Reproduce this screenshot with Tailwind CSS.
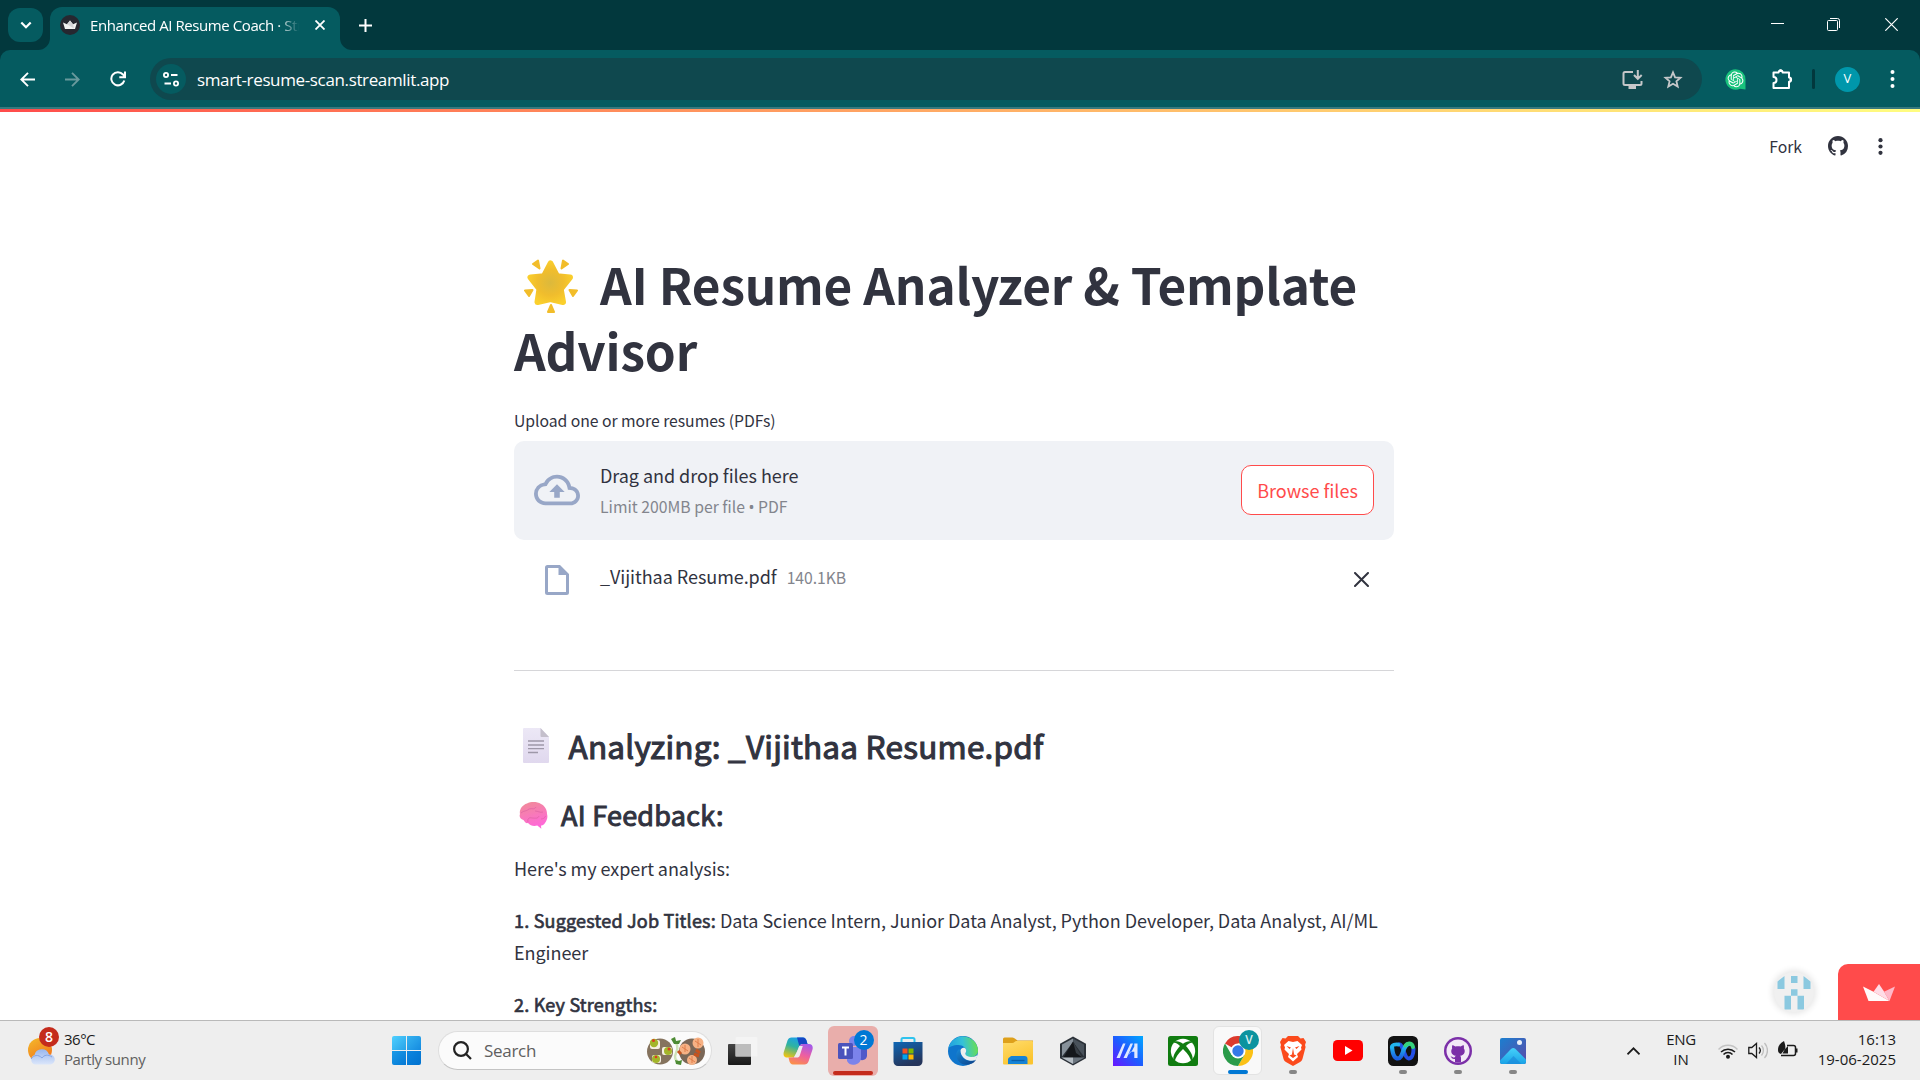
<!DOCTYPE html>
<html lang="en">
<head>
<meta charset="utf-8">
<title>Enhanced AI Resume Coach · Streamlit</title>
<script src="https://cdn.jsdelivr.net/npm/@tailwindcss/browser@4"></script>
</head>
<body class="w-[1920px] h-[1080px] overflow-hidden flex flex-col bg-white font-['Open_Sans',sans-serif]">

<!-- Tab strip -->
<header class="h-[50px] shrink-0 bg-[#02383d] flex items-start text-white">
  <div class="ml-2 mt-2 w-[35px] h-[34px] rounded-xl bg-[#055b60] flex items-center justify-center">
    <svg class="w-[12px] h-[8px]" viewBox="0 0 12 8" fill="none" stroke="#fff" stroke-width="2.2"><path d="M1.3 1.5 6 6.2l4.700-4.700"/></svg>
  </div>
  <div class="relative ml-[7px] mt-[7px] w-[290px] h-[43px] rounded-t-xl bg-[#055b60] flex items-center pb-[7px]">
    <svg class="absolute bottom-0 -left-[12px] w-[12px] h-[12px]" viewBox="0 0 12 12"><path d="M12 0v12H0A12 12 0 0 0 12 0z" fill="#055b60"/></svg>
    <svg class="absolute bottom-0 -right-[12px] w-[12px] h-[12px]" viewBox="0 0 12 12"><path d="M0 0v12h12A12 12 0 0 1 0 0z" fill="#055b60"/></svg>
    <svg class="ml-[10px] w-5 h-5" viewBox="0 0 20 20"><circle cx="10" cy="10" r="10" fill="#262730"/><path d="M3 7.500l4 1.800L10 5.600l3 3.700 4-1.800-2 6.500H5z" fill="#f1f1f1"/><path d="M10 5.600 7 9.300l7 4.200-1-4.200z" fill="#d5d5d8"/></svg>
    <div class="ml-[10px] w-[209px] overflow-hidden whitespace-nowrap text-[15px] leading-5 tracking-[-0.42px] mask-r-from-90% mask-r-to-100%">Enhanced AI Resume Coach · Streamlit</div>
    <svg class="ml-[16px] w-[10px] h-[10px]" viewBox="0 0 10 10" stroke="#fff" stroke-width="1.800"><path d="M.5.5l9 9M9.500.5l-9 9"/></svg>
  </div>
  <svg class="ml-[19px] mt-[19px] w-[13px] h-[13px]" viewBox="0 0 13 13" stroke="#fff" stroke-width="2"><path d="M6.500 0v13M0 6.500h13"/></svg>
  <div class="ml-auto mr-[22px] mt-[18px] flex items-center">
    <svg class="w-[13px] h-[13px]" viewBox="0 0 13 13" stroke="#fff"><path d="M0 5.500h13"/></svg>
    <svg class="ml-[43px] w-[13px] h-[13px]" viewBox="0 0 13 13" fill="none" stroke="#fff"><rect x=".5" y="2.500" width="10" height="10" rx="1"/><path d="M3 .5h7.500a2 2 0 0 1 2 2V10"/></svg>
    <svg class="ml-[45px] w-[13px] h-[13px]" viewBox="0 0 13 13" stroke="#fff" stroke-width="1.200"><path d="M.3.300l12.400 12.400M12.700.3.300 12.700"/></svg>
  </div>
</header>

<!-- Toolbar -->
<div class="h-[57px] shrink-0 bg-[#02383d]">
  <div class="h-[57px] rounded-t-[10px] bg-[#055b60] flex items-center pt-[1px]">
    <svg class="ml-5 w-[15px] h-[15px]" viewBox="0 0 15 15" fill="none" stroke="#fff" stroke-width="1.900"><path d="M15 7.500H1.500M8 .8 1.300 7.500 8 14.200"/></svg>
    <svg class="ml-[30px] w-[15px] h-[15px]" viewBox="0 0 15 15" fill="none" stroke="#69999c" stroke-width="1.900"><path d="M0 7.500h13.500M7 .8l6.700 6.700L7 14.200"/></svg>
    <svg class="ml-[30px] w-[16px] h-[16px]" viewBox="0 0 16 16" fill="none" stroke="#fff" stroke-width="2"><path d="M14.300 9.500A6.600 6.600 0 1 1 13 3.500l1.800 2.300M15 .5v5.800H9.300"/></svg>
    <div class="ml-6 w-[1552px] h-[42px] rounded-full bg-[#0f484e] flex items-center px-[6px]">
      <div class="w-[30px] h-[30px] rounded-full bg-[#055b60] flex items-center justify-center">
        <svg class="w-4 h-[15px]" viewBox="0 0 16 15" fill="none" stroke="#fff" stroke-width="1.800"><circle cx="3" cy="3" r="2.100"/><path d="M8 3h6.500M1.500 11.500H8"/><circle cx="13" cy="11.500" r="2.100"/></svg>
      </div>
      <div class="ml-[11px] pt-px text-[17px] leading-6 tracking-[-0.36px] text-white">smart-resume-scan.streamlit.app</div>
      <svg class="ml-auto w-[21px] h-[19px]" viewBox="0 0 21 19" fill="none" stroke="#c5c7c9" stroke-width="2"><path d="M11 2H3a1.500 1.500 0 0 0-1.500 1.500v10A1.500 1.500 0 0 0 3 15h15a1.500 1.500 0 0 0 1.500-1.500V11M15.800 0v8.500M12 5l3.800 3.900L19.700 5"/><path d="M6.500 17.500h7.500" stroke-width="3"/></svg>
      <svg class="ml-5 mr-[13px] w-[20px] h-[19px]" viewBox="0 0 20 19" fill="none" stroke="#c5c7c9" stroke-width="1.800"><path d="M10 2.300l2.100 5 5.400.5-4.100 3.500 1.300 5.300L10 13.800l-4.700 2.800 1.300-5.300-4.100-3.500 5.400-.5z"/></svg>
    </div>
    <svg class="ml-[23px] w-[21px] h-[21px]" viewBox="0 0 21 21"><path d="M10.500.3A10.200 10.200 0 1 0 15 19.700l5.500.8V10.500A10.200 10.200 0 0 0 10.500.3z" fill="#19c37d"/><g transform="translate(2.600 2.500) scale(.66)"><path fill="#fff" d="M22.282 9.821a5.985 5.985 0 0 0-.516-4.910 6.046 6.046 0 0 0-6.510-2.900A6.065 6.065 0 0 0 4.981 4.182a5.985 5.985 0 0 0-3.998 2.900 6.046 6.046 0 0 0 .743 7.097 5.980 5.980 0 0 0 .511 4.911 6.051 6.051 0 0 0 6.515 2.900A5.985 5.985 0 0 0 13.260 24a6.056 6.056 0 0 0 5.772-4.206 5.990 5.990 0 0 0 3.998-2.900 6.056 6.056 0 0 0-.748-7.073zm-9.022 12.608a4.476 4.476 0 0 1-2.876-1.040l.142-.081 4.778-2.758a.795.795 0 0 0 .393-.681v-6.737l2.020 1.168a.071.071 0 0 1 .038.052v5.583a4.504 4.504 0 0 1-4.495 4.494zm-9.661-4.125a4.471 4.471 0 0 1-.535-3.014l.142.085 4.783 2.758a.771.771 0 0 0 .781 0l5.843-3.369v2.333a.080.080 0 0 1-.033.061L9.740 19.950a4.499 4.499 0 0 1-6.141-1.646zM2.341 7.896a4.485 4.485 0 0 1 2.365-1.973V11.600a.766.766 0 0 0 .388.677l5.814 3.354-2.020 1.169a.076.076 0 0 1-.071 0l-4.830-2.787A4.504 4.504 0 0 1 2.341 7.872zm16.596 3.855L13.104 8.364 15.119 7.200a.076.076 0 0 1 .071 0l4.830 2.791a4.494 4.494 0 0 1-.676 8.104v-5.677a.790.790 0 0 0-.407-.667zm2.011-3.023l-.142-.085-4.773-2.782a.776.776 0 0 0-.786 0L9.409 9.230V6.897a.066.066 0 0 1 .028-.061l4.830-2.787a4.499 4.499 0 0 1 6.681 4.660zM8.307 12.863l-2.020-1.164a.080.080 0 0 1-.038-.057V6.074a4.499 4.499 0 0 1 7.375-3.453l-.142.080L8.704 5.459a.795.795 0 0 0-.393.681zm1.097-2.365l2.602-1.500 2.607 1.500v2.999l-2.597 1.500-2.607-1.500Z"/></g></svg>
    <svg class="ml-[25px] w-[22px] h-[22px]" viewBox="0 0 22 22"><path d="M2.500 4.500H7.600a2 2 0 0 1 4 0H18V9.600a2.100 2.100 0 0 1 0 4.200V20H2.500v-5a3 3 0 0 0 0-6z" fill="none" stroke="#fff" stroke-width="2" stroke-linejoin="round"/><path d="M7.500 4a2 2.600 0 0 1 4.200 0zM18.500 9.500a2.400 2.200 0 0 1 0 4.400z" fill="#fff"/></svg>
    <div class="ml-[19px] w-[3px] h-5 rounded bg-[#02383d]"></div>
    <div class="ml-5 w-[25px] h-[25px] rounded-full bg-[#0097ab] text-white text-[13px] flex items-center justify-center">V</div>
    <svg class="ml-[30px] w-[5px] h-[18px]" viewBox="0 0 5 18" fill="#fff"><circle cx="2.500" cy="2" r="2"/><circle cx="2.500" cy="9" r="2"/><circle cx="2.500" cy="16" r="2"/></svg>
  </div>
</div>
<div class="h-[2px] shrink-0 bg-[#37797e]"></div>

<!-- Streamlit page -->
<main class="relative h-[911px] shrink-0 overflow-hidden bg-white text-[#31333f] font-['Noto_Sans_CJK_SC',sans-serif]">
  <div class="h-[3px] bg-linear-to-r from-[#ff4b4b] to-[#fffd80]"></div>
  <div class="h-[68px] flex items-center justify-end pr-[37px]">
    <span class="pt-[2px] text-[15.75px] leading-6">Fork</span>
    <svg class="ml-[26px] w-5 h-5" viewBox="0 0 16 16" fill="#31333f"><path d="M8 0C3.580 0 0 3.580 0 8c0 3.540 2.290 6.530 5.470 7.590.4.070.55-.17.55-.38 0-.19-.01-.82-.01-1.490-2.010.37-2.530-.49-2.690-.94-.09-.23-.48-.94-.82-1.130-.28-.15-.68-.52-.01-.53.63-.01 1.080.58 1.230.82.72 1.210 1.870.87 2.330.66.070-.52.28-.87.51-1.070-1.780-.2-3.640-.89-3.640-3.950 0-.87.31-1.590.82-2.150-.08-.2-.36-1.020.08-2.120 0 0 .67-.21 2.200.82.64-.18 1.320-.27 2-.27s1.360.09 2 .27c1.530-1.040 2.200-.82 2.200-.82.44 1.100.16 1.920.08 2.120.51.56.82 1.270.82 2.150 0 3.070-1.870 3.750-3.650 3.950.29.25.54.73.54 1.480 0 1.070-.01 1.930-.01 2.200 0 .21.15.46.55.38A8.010 8.010 0 0 0 16 8c0-4.420-3.580-8-8-8z"/></svg>
    <svg class="ml-[30px] w-[5px] h-[17px]" viewBox="0 0 5 17" fill="#31333f"><circle cx="2.500" cy="2.200" r="2.100"/><circle cx="2.500" cy="8.500" r="2.100"/><circle cx="2.500" cy="14.800" r="2.100"/></svg>
  </div>

  <div class="ml-[514px] w-[880px] mt-[71px]">
    <h1 class="text-[49.5px] leading-[66px] font-bold whitespace-nowrap tracking-[-0.17px]">
      <span class="flex items-center h-[66px]">
        <svg class="ml-[10px] mt-[3px] w-[54px] h-[54px]" viewBox="0 0 54 54">
          <defs><radialGradient id="star" cx=".5" cy=".5" r=".6"><stop offset="0" stop-color="#dcb93c"/><stop offset=".55" stop-color="#f0bd2d"/><stop offset="1" stop-color="#fbd02c"/></radialGradient></defs>
          <path d="M26.500 4.500L33 17.200l13 1.200-9.300 11.600 2.300 13L26.500 40 13.500 43l2-13L6.500 18.400l13.500-1.200z" fill="url(#star)" stroke="url(#star)" stroke-width="6" stroke-linejoin="round"/>
          <g fill="#f2bd2a" stroke="#f2bd2a" stroke-width="2" stroke-linejoin="round"><path d="M9 5l5-3.500 1.500 8zM44 5l-5-3.500-1.500 8zM1 31.500l7.500-.5L5 37zM53 31.500l-7.500-.5L49 37zM27 46l3 7h-6z"/></g>
        </svg>
        <span class="ml-[22px]">AI Resume Analyzer &amp; Template</span>
      </span>
      <span>Advisor</span>
    </h1>
    <p class="mt-[26px] h-6 text-[15.75px] leading-6 tracking-[-0.04px]">Upload one or more resumes (PDFs)</p>
    <div class="mt-[8px] h-[99px] rounded-[10px] bg-[#f0f2f6] flex items-center px-5 pb-px">
      <svg class="w-[46px] h-[46px]" viewBox="0 0 24 24" fill="#98a7c7"><path d="M19.350 10.040A7.490 7.490 0 0 0 12 4C9.110 4 6.600 5.640 5.350 8.040A5.994 5.994 0 0 0 0 14c0 3.310 2.690 6 6 6h13c2.760 0 5-2.240 5-5 0-2.640-2.050-4.780-4.650-4.960zM19 18H6c-2.210 0-4-1.790-4-4 0-2.050 1.530-3.760 3.560-3.970l1.070-.11.5-.95A5.469 5.469 0 0 1 12 6c2.620 0 4.880 1.860 5.390 4.430l.3 1.500 1.530.11A2.980 2.980 0 0 1 22 15c0 1.650-1.350 3-3 3zM8 13h2.550v3h2.900v-3H16l-4-4-4 4z"/></svg>
      <div class="ml-5 flex flex-col items-start pt-[2px]">
        <span class="text-[18px] leading-8 tracking-[-0.05px]">Drag and drop files here</span>
        <span class="text-[15.75px] leading-8 text-[#83858d]">Limit 200MB per file <span class="font-['Noto_Sans',sans-serif]">•</span> PDF</span>
      </div>
      <button class="ml-auto w-[133px] h-[50px] rounded-[10px] border border-[#ff4b4b] bg-white text-[18px] text-[#ff4b4b] flex items-center justify-center">Browse files</button>
    </div>
    <div class="h-[80px] flex items-center pl-[31px] pr-[25px]">
      <svg class="w-6 h-[30px]" viewBox="0 0 24 30" fill="#98a7c7"><path fill-rule="evenodd" d="M2.500 0H15l9 9v18.500A2.500 2.500 0 0 1 21.500 30h-19A2.500 2.500 0 0 1 0 27.500v-25A2.500 2.500 0 0 1 2.500 0zM3 3v24h18V10h-7.500V3z"/></svg>
      <span class="ml-[31px] pb-[8px] text-[18px] leading-8 tracking-[-0.05px]">_Vijithaa Resume.pdf</span>
      <span class="ml-[10px] pb-[4px] text-[15.75px] leading-8 tracking-[-0.05px] text-[#83858d]">140.1KB</span>
      <svg class="ml-auto w-[15px] h-[15px] mb-[1px]" viewBox="0 0 15 15" stroke="#31333f" stroke-width="2" stroke-linecap="round"><path d="M1 1l13 13M14 1 1 14"/></svg>
    </div>
    <hr class="mt-[50px] border-0 h-px bg-[#d6d6d9]">
    <h2 class="mt-[51px] h-[46px] flex items-center text-[31.5px] font-normal [-webkit-text-stroke:1.1px_#31333f] leading-[46px] tracking-[0.23px] whitespace-nowrap">
      <svg class="ml-[9px] mt-px w-[26px] h-[35px]" viewBox="0 0 26 35"><defs><linearGradient id="doc" x1="0" y1="0" x2="0" y2="1"><stop offset="0" stop-color="#ece8f6"/><stop offset="1" stop-color="#e0d8ee"/></linearGradient></defs><path d="M1 0h16.500L26 9v25a1 1 0 0 1-1 1H1a1 1 0 0 1-1-1V1a1 1 0 0 1 1-1z" fill="url(#doc)"/><path d="M17.500 0v8a1 1 0 0 0 1 1H26z" fill="#c4bfcb"/><path d="M5 13h16M5 17h16M5 20.700h16M5 24.500h10" stroke="#9e98a9" stroke-width="1.300"/></svg>
      <span class="ml-[19.500px]">Analyzing: _Vijithaa Resume.pdf</span>
    </h2>
    <h3 class="mt-[27px] h-[40px] flex items-center text-[27px] font-normal [-webkit-text-stroke:1px_#31333f] leading-[40px] tracking-[0.26px] whitespace-nowrap">
      <svg class="ml-[5px] w-[29px] h-[27px]" viewBox="0 0 29 27"><defs><linearGradient id="brain" x1="0" y1="0" x2=".3" y2="1"><stop offset="0" stop-color="#f08c96"/><stop offset=".5" stop-color="#f77cb5"/><stop offset="1" stop-color="#ff68d8"/></linearGradient></defs><path d="M8 1.500C12-.5 18-.5 22 2c4 2 6 6 6 10 1 3 0 6-2 9-1 2-3 2.500-4 2.500l.3 3.300-4-3.300c-3 1-7 .5-9.300-2.500-2 .5-3-.5-4.500-3C1 17 0 14.500 1 12 0 8 3 3 8 1.500z" fill="url(#brain)"/><path d="M2 11c3-3 5-1 8-4M10 7c3-1 5 1 7-2M9 20c-1-3 1-5 4-4 3 0 6 1 7-2M16 9c3 0 5 2 8 1M22 17c2 0 4-1 4.500-3" fill="none" stroke="#dd62a2" stroke-width="1" opacity=".7"/></svg>
      <span class="ml-[13px]">AI Feedback:</span>
    </h3>
    <div class="mt-[17px] text-[18px] leading-8 tracking-[-0.05px] flex flex-col gap-5">
      <p>Here's my expert analysis:</p>
      <p class="whitespace-nowrap"><strong class="font-normal [-webkit-text-stroke:0.65px_#31333f] tracking-[0.2px]">1. Suggested Job Titles:</strong> Data Science Intern, Junior Data Analyst, Python Developer, Data Analyst, AI/ML<br>Engineer</p>
      <p><strong class="font-normal [-webkit-text-stroke:0.65px_#31333f] tracking-[0.2px]">2. Key Strengths:</strong></p>
    </div>
  </div>

  <div class="absolute left-[1774px] top-[863px] w-10 h-10 rounded-full bg-[#f0f0f0] shadow-[0_0_6px_2px_rgba(0,0,0,0.1)] overflow-hidden flex items-center justify-center">
    <svg class="w-10 h-10" viewBox="0 0 40 40" fill="#8bc9e0"><path d="M3.500 17V9.500L10.500 4v13zM36.500 17V9.500L29.500 4v13zM17 4h6.500v7H17zM17 17.300h6.500v6.500h6.500v13.700h-6.500V23.800H17v13.700h-6.500V23.800H17z"/></svg>
  </div>
  <div class="absolute right-0 bottom-0 w-[82px] h-[56px] rounded-tl-[10px] bg-[#ff4b4b]">
    <svg class="ml-[25px] mt-5 w-8 h-[17px]" viewBox="0 0 32 17"><path d="M0 2.500l10.500 5.300L26.500 17H5.500z" fill="#fffafa"/><path d="M10.500 7.800 16 0l5 7.500L26.500 17z" fill="#ffdce6"/><path d="M21 7.800 32 2.500 26.500 17z" fill="#ffb8c8"/></svg>
  </div>
</main>

<!-- Taskbar -->
<footer class="relative h-[60px] shrink-0 bg-[#eeeeee] border-t border-[#b9b9b9] flex items-center text-[#1b1b1b]">
  <div class="relative ml-7 w-[28px] h-[28px]">
    <svg class="w-[28px] h-[28px]" viewBox="0 0 28 28"><defs><linearGradient id="sun" x1="0" y1="0" x2=".6" y2="1"><stop offset="0" stop-color="#f3bb2c"/><stop offset="1" stop-color="#f2761b"/></linearGradient><linearGradient id="cl" x1="0" y1="0" x2="0" y2="1"><stop offset="0" stop-color="#98b6ee"/><stop offset="1" stop-color="#dbe6fa"/></linearGradient></defs><circle cx="12" cy="13" r="12" fill="url(#sun)"/><path d="M7 27.500a5 5 0 0 1-.5-9.500 7.500 7.500 0 0 1 14.500-.5 5 5 0 0 1 1.500 10z" fill="url(#cl)"/><path d="M3 22c3-4 7-5 11-1 2-3 6-4 10-1" fill="none" stroke="#86a5e4"/></svg>
    <div class="absolute left-[11px] -top-[10px] w-5 h-5 rounded-full bg-[#c42b1c] text-white text-[14px] font-semibold flex items-center justify-center">8</div>
  </div>
  <div class="ml-2 pb-1 flex flex-col items-start text-[15px] leading-5 w-[90px] whitespace-nowrap">
    <span class="tracking-[-0.5px]">36°C</span>
    <span class="text-[#606060] tracking-[-0.42px]">Partly sunny</span>
  </div>
  <div class="ml-[238px] w-[29px] h-[29px] grid grid-cols-2 gap-px">
    <div class="rounded-tl-[2px] bg-linear-to-br from-[#4fd0ff] to-[#27a3e8]"></div><div class="rounded-tr-[2px] bg-linear-to-br from-[#36b3f0] to-[#148be0]"></div>
    <div class="rounded-bl-[2px] bg-linear-to-br from-[#1a9be8] to-[#0678d4]"></div><div class="rounded-br-[2px] bg-linear-to-br from-[#0d86e0] to-[#0272cf]"></div>
  </div>
  <div class="ml-[17px] w-[274px] h-[39px] rounded-full bg-[#fbfbfb] border border-[#dedede] border-b-[#c4c4c4] flex items-center">
    <svg class="ml-[14px] w-[19px] h-[19px]" viewBox="0 0 19 19" fill="none" stroke="#222" stroke-width="2.200"><circle cx="8" cy="8" r="6.900"/><path d="M12.800 12.800l5.200 5.200"/></svg>
    <span class="ml-[12px] text-[17px] tracking-[-0.3px] text-[#5f5f5f]">Search</span>
    <svg class="ml-auto mr-[5px] w-[60px] h-[30px]" viewBox="0 0 60 30">
      <circle cx="14" cy="15.500" r="13" fill="#85735e"/><circle cx="46" cy="15.500" r="13" fill="#7a6757"/>
      <g fill="#f5efe2"><rect x="4" y="4" width="10" height="9" rx="2"/><rect x="16" y="11" width="10" height="8" rx="2"/><rect x="6" y="19" width="9" height="8" rx="2"/></g>
      <g fill="#a3b52a"><circle cx="8" cy="7" r="4.200"/><circle cx="22" cy="15" r="4"/><circle cx="10" cy="23" r="4"/></g>
      <g fill="#dd3b22"><circle cx="7.500" cy="4.500" r="1.500"/><circle cx="23" cy="13" r="1.500"/><circle cx="10" cy="21" r="1.300"/></g>
      <path d="M27 2c4 6 6 9 3 15s1 8 4 11" fill="none" stroke="#cfe3b8" stroke-width="2.500"/>
      <path d="M25 3l4-2 1 4 5-1-2 4h-5zM29 24l4 1 3-1-1 5-5-1z" fill="#4d8b35"/>
      <g fill="#f6b184"><circle cx="39" cy="13" r="5.500"/><circle cx="52" cy="7" r="5.500"/><circle cx="46" cy="24" r="5"/></g>
      <g fill="none" stroke="#e07e4a"><path d="M36 11l6 4M39 9v7M49 5l6 4M52 3v8M43 22l6 4M46 20v7"/></g>
      <path d="M50 14l4 3M32 15l3 3M48 18l5 2" stroke="#c7531d" stroke-width="3"/>
    </svg>
  </div>

  <nav class="ml-[3px] flex h-full">
    <div class="w-[55px] flex items-center justify-center"><svg class="w-[30px] h-[30px]" viewBox="0 0 30 30"><defs><linearGradient id="tv" x1="0" y1="0" x2="0" y2="1"><stop offset="0" stop-color="#454545"/><stop offset="1" stop-color="#191919"/></linearGradient></defs><rect y="8" width="23" height="21" rx="1" fill="url(#tv)"/><rect x="7.500" y="1" width="22" height="19.500" rx="1" fill="#f5f5f5" opacity=".75"/><path d="M7.500 8H23v12.500H7.500z" fill="#bdbdbd"/></svg></div>

    <div class="w-[55px] flex items-center justify-center"><svg class="w-[30px] h-[28px]" viewBox="0 0 30 28"><defs><linearGradient id="cp1" x1=".6" y1="0" x2=".2" y2="1"><stop offset="0" stop-color="#1aa0ea"/><stop offset=".45" stop-color="#2fb3a0"/><stop offset="1" stop-color="#f2c40f"/></linearGradient><linearGradient id="cp2" x1=".7" y1="0" x2=".3" y2="1"><stop offset="0" stop-color="#a55ae8"/><stop offset=".5" stop-color="#ee5fa0"/><stop offset="1" stop-color="#fb8f4a"/></linearGradient></defs><path d="M8.500.5H20c2 0 3 1.500 3.500 3L24.500 7H20c-2 0-3.200 1-4 3l-3 7.500c-.8 2-2 3-4 3H4C1 20.500 0 18 .8 15L4.500 3.500C5.300 1.500 6.500.5 8.500.5z" fill="url(#cp1)"/><path d="M14 .5h6c2 0 3 1.500 3.500 3L24.500 7H20c-2 0-3 .6-3.700 2z" fill="#1547c4"/><path d="M21.500 27.500H10c-2 0-3-1.500-3.500-3L5.500 20.500H9c2 0 3.200-1 4-3L16 10c.8-2 2-3 4-3h6c3 0 4.300 2.500 3.500 5.500L25.500 24.500c-.8 2-2 3-4 3z" fill="url(#cp2)"/><path d="M14 14.500L16.300 9h3.500l-3 9.500c-.5 1.500-1.500 2-2.500 2h-3.500z" fill="#eeeeee"/></svg></div>

    <div class="w-[55px] flex items-center justify-center"><div class="relative w-[50px] h-[50px] rounded-md bg-[#e9aeab] flex items-center justify-center">
      <svg class="w-[30px] h-[30px]" viewBox="0 0 30 30"><circle cx="16" cy="5" r="5" fill="#7b83eb"/><circle cx="26" cy="7" r="3" fill="#5059c9"/><path d="M20 11h9v9a5 5 0 0 1-9 2z" fill="#5059c9"/><path d="M9 11h14v10a7.500 7.500 0 0 1-14 4z" fill="#7b83eb"/><rect y="7" width="15" height="16" rx="1.500" fill="#4b53bc"/><path d="M4 11.500h7M7.500 11.500v8" stroke="#fff" stroke-width="2"/></svg>
      <div class="absolute left-[26px] top-[4px] w-5 h-5 rounded-full bg-[#0078d4] text-white text-[14px] leading-5 text-center">2</div>
      <div class="absolute left-[5px] bottom-[1px] w-10 h-1 rounded-full bg-[#c42b1c]"></div>
    </div></div>

    <div class="w-[55px] flex items-center justify-center"><svg class="w-[30px] h-[30px]" viewBox="0 0 30 30"><defs><linearGradient id="st" x1="0" y1="0" x2=".4" y2="1"><stop offset="0" stop-color="#0f67b5"/><stop offset="1" stop-color="#25355b"/></linearGradient></defs><path d="M8.500 7V3.500a1.500 1.500 0 0 1 1.500-1.500h10a1.500 1.500 0 0 1 1.500 1.500V7" fill="none" stroke="#2fc3ee" stroke-width="2"/><path d="M.5 6h29v19.500a4.500 4.500 0 0 1-4.500 4.500H5a4.500 4.500 0 0 1-4.500-4.500z" fill="url(#st)"/><path d="M9.500 12.500h5v5h-5z" fill="#f25022"/><path d="M15.500 12.500h5v5h-5z" fill="#7fba00"/><path d="M9.500 18.500h5v5h-5z" fill="#00a4ef"/><path d="M15.500 18.500h5v5h-5z" fill="#ffb900"/></svg></div>

    <div class="w-[55px] flex items-center justify-center"><svg class="w-[30px] h-[30px]" viewBox="0 0 30 30"><defs><linearGradient id="e1" x1="0" y1=".5" x2="1" y2=".4"><stop offset="0" stop-color="#1f9fe0"/><stop offset=".5" stop-color="#35c1d8"/><stop offset="1" stop-color="#6ae04c"/></linearGradient><linearGradient id="e2" x1="0" y1="0" x2="1" y2="1"><stop offset="0" stop-color="#1787d6"/><stop offset="1" stop-color="#0c3f86"/></linearGradient></defs><circle cx="15" cy="15" r="15" fill="#0f75cc"/><path d="M.3 12.500A15 15 0 0 1 30 14.500c0 4-3 6.500-7 6.500-3.500 0-6-1.200-6-2.600 0-.8 1.200-1.300 1.200-3.400C18 12 15 9 10.500 9 5 9 1 11 .3 12.500z" fill="url(#e1)"/><path d="M10.500 13.500c-3 3-3 8 .5 12s9 4 14 1.500c1.500-1 2.500-2.200 3-3.200-1 .6-3 1.200-5.500 1.200-5.500 0-10-4-10-8 0-1.500.8-3 1.500-3.500z" fill="url(#e2)"/><path d="M12.500 14.500c.5-2 2-3 3.700-2.700 2 .7 2.500 3 1.500 5-1 1 0 4 5.300 4.200 3.500.1 5.500-1 6.500-2.500-.3 2-1 4-2 5.200-1.500.9-4 1.300-5.500 1-5-.5-9.500-4.500-9.500-10.200z" fill="#eeeeee"/></svg></div>

    <div class="w-[55px] flex items-center justify-center"><svg class="w-[30px] h-[28px]" viewBox="0 0 30 28"><defs><linearGradient id="fo" x1="0" y1="0" x2=".5" y2="1"><stop offset="0" stop-color="#ffdc6c"/><stop offset="1" stop-color="#fbc42f"/></linearGradient></defs><path d="M1.500 0.500h8c1 0 2 .5 3 1.500l2 1.500H30V9H0V2A1.500 1.500 0 0 1 1.500.5z" fill="#dea01b"/><path d="M0 6h9.500c1.500 0 2.500-2 4-2H29a1 1 0 0 1 1 1v21.500a1 1 0 0 1-1 1H1a1 1 0 0 1-1-1z" fill="url(#fo)"/><path d="M7 20a2 2 0 0 1 2-1h12.500a3 3 0 0 1 3 3v5H5v-5a3 3 0 0 1 2-2z" fill="#1583d6"/><path d="M8.500 23.500h13" stroke="#0a5fa8" stroke-width="1.300"/></svg></div>

    <div class="w-[55px] flex items-center justify-center"><svg class="w-[28px] h-[30px]" viewBox="0 0 28 30"><defs><linearGradient id="hx" x1="0" y1="0" x2="0" y2="1"><stop offset="0" stop-color="#1d2228"/><stop offset="1" stop-color="#8b959e"/></linearGradient></defs><path d="M14 .5l13 7.200v14.600l-13 7.200-13-7.200V7.700z" fill="#2b3138"/><path d="M14 2.500 3 8.500v12L14 6z" fill="#87919a"/><path d="M14 2.500l11 6v12L14 6z" fill="#49525b"/><path d="M14 5.500 4.500 21.500h19z" fill="#14171b"/><path d="M14 5.500 23.500 21.500 17 17z" fill="#363d44"/><path d="M2.500 21.500h11.500V28z" fill="#b5bdc4"/><path d="M25.500 21.500H14V28z" fill="#6b757e"/></svg></div>

    <div class="w-[55px] flex items-center justify-center"><svg class="w-[30px] h-[30px]" viewBox="0 0 30 30"><defs><linearGradient id="ma" x1="0" y1="1" x2="1" y2="0"><stop offset="0" stop-color="#6a14ff"/><stop offset=".5" stop-color="#1d5dff"/><stop offset="1" stop-color="#00a8ff"/></linearGradient></defs><path d="M0 0h30v30H0z" fill="url(#ma)"/><g fill="#dfe8ff"><path d="M3.500 22 10 7.500h2.500L6.800 22zM10.500 22l7-14.500h2.500L13.800 22zM15.500 19l1.600-3.200h4.200V22h3.200V7.500h-3.200v3l-2 3.800z"/></g></svg></div>

    <div class="w-[55px] flex items-center justify-center"><svg class="w-[30px] h-[30px]" viewBox="0 0 30 30"><rect width="30" height="30" rx="2.500" fill="#107c10"/><circle cx="15" cy="15" r="12.200" fill="#fff"/><path d="M6.500 5.500C9.500 4.500 12.500 6 15 7.700c2.500-1.700 5.500-3.200 8.500-2.200l1 1.500c-2-.6-4.500 1-6.500 3 3.500 4 7.500 9.500 6.500 13.500l-1.500 1C22 20.500 18 15.800 15 13c-3 2.800-7 7.500-8 11.500l-1.500-1C4.500 19.500 8.500 14 12 10c-2-2-4.500-3.600-6.500-3z" fill="#107c10"/></svg></div>

    <div class="w-[55px] flex items-center justify-center"><div class="relative w-[49px] h-[49px] rounded-md bg-[#f9f9f9] border border-[#e3e3e3] flex items-center justify-center">
      <svg class="w-[30px] h-[30px]" viewBox="0 0 30 30"><path d="M15 15 2 7.500A15 15 0 0 1 28 7.500H15z" fill="#dc3a2d"/><path d="M15 7.500h13A15 15 0 0 1 15 30l6.500-11.300z" fill="#fbc116"/><path d="M2 7.500A15 15 0 0 0 15 30l6.500-11.300-13 0z" fill="#2a9b49"/><circle cx="15" cy="15" r="7.500" fill="#fff"/><circle cx="15" cy="15" r="5.700" fill="#3579e8"/></svg>
      <div class="absolute left-[25px] top-[3px] w-5 h-5 rounded-full bg-[#0b939f] text-[#d8f0f2] text-[12px] leading-5 text-center font-semibold">V</div>
      <div class="absolute left-[14px] bottom-0 w-5 h-1 rounded-full bg-[#0078d4]"></div>
    </div></div>

    <div class="relative w-[55px] flex items-center justify-center"><svg class="w-[26px] h-[30px]" viewBox="0 0 26 30"><path d="M8 0h10l2.500 2.500 3-.5 2.500 4-1 3 .6 2-3 11.500c-.4 1.500-1 2.500-2.500 3.500L13 30l-7.100-4c-1.500-1-2.100-2-2.500-3.500L.4 11 1 9 0 6l2.500-4 3 .5z" fill="#fb4a1c"/><path d="M8.500 5l4.500 1 4.500-1 4.500 4-1 2.500.5 2-4.500 4.500 1 3L13 25.500 8 21l1-3-4.500-4.500.5-2L4 9z" fill="#fff"/><path d="M6.500 10l4.500 1.500L9.500 13zM19.500 10 15 11.500l1.500 1.500zM13 12l1 6-1 1.500-1-1.500zM9.500 19.500 13 18l3.500 1.500L13 22z" fill="#fb4a1c"/></svg><i class="absolute bottom-[6px] left-[23.5px] w-2 h-1 rounded-full bg-[#868686]"></i></div>

    <div class="w-[55px] flex items-center justify-center"><svg class="w-[30px] h-[21px]" viewBox="0 0 30 21"><rect width="30" height="21" rx="4.500" fill="#f00"/><path d="M12 6l7.500 4.500L12 15z" fill="#fff"/></svg></div>

    <div class="relative w-[55px] flex items-center justify-center"><svg class="w-[30px] h-[30px]" viewBox="0 0 30 30"><defs><linearGradient id="wx" x1="0" y1="0" x2="0" y2="1"><stop offset="0" stop-color="#22c8f5"/><stop offset="1" stop-color="#1b5fe0"/></linearGradient></defs><rect width="30" height="30" rx="5.500" fill="#121212"/><path d="M10.500 8.500c4.500-2 5.500 14 10 14 3.500 0 5-5 5-10" fill="none" stroke="#2450e6" stroke-width="4" stroke-linecap="round"/><path d="M4 11c.5 6 2 11.500 6 11.500 5.500 0 4.500-14 11-14.500" fill="none" stroke="url(#wx)" stroke-width="4.200" stroke-linecap="round"/><path d="M4 11c0-2 3-3 6.500-2.500" fill="none" stroke="#22b4ee" stroke-width="3.600" stroke-linecap="round"/><path d="M17.500 9.500c2-3 6.500-3 7.500 1.500" fill="none" stroke="#36d27d" stroke-width="4" stroke-linecap="round"/></svg><i class="absolute bottom-[6px] left-[23.5px] w-2 h-1 rounded-full bg-[#868686]"></i></div>

    <div class="relative w-[55px] flex items-center justify-center"><svg class="w-[28px] h-[28px]" viewBox="0 0 28 28"><circle cx="14" cy="14" r="14" fill="#7b2fa8"/><circle cx="14" cy="14" r="11.500" fill="#f2e8f7"/><circle cx="14" cy="14" r="10.600" fill="#f2e8f7"/><path d="M8.500 8l3 1.600c1.600-.4 3.400-.4 5 0L19.500 8c.6 1.300.6 2.500.3 3.300 2 3 .8 7-3.600 7.500.6.7.8 1.300.8 2.200v4.500h-6V22c-3 .6-3.500-2-4.500-2.500 2-.6 2 1.500 4.500.8 0-.7.3-1.200.8-1.500-4.400-.5-5.600-4.500-3.600-7.500-.3-.8-.3-2 .3-3.300z" fill="#7b2fa8"/></svg><i class="absolute bottom-[6px] left-[23.5px] w-2 h-1 rounded-full bg-[#868686]"></i></div>

    <div class="relative w-[55px] flex items-center justify-center"><svg class="w-[26px] h-[26px]" viewBox="0 0 26 26"><defs><linearGradient id="ph" x1="0" y1="0" x2="1" y2="1"><stop offset="0" stop-color="#1b7fd0"/><stop offset="1" stop-color="#5c4aa8"/></linearGradient><linearGradient id="mt" x1="0" y1="0" x2="0" y2="1"><stop offset="0" stop-color="#45d0fa"/><stop offset="1" stop-color="#1aa2e6"/></linearGradient></defs><rect width="26" height="26" rx="2" fill="url(#ph)"/><path d="M0 22.500 11 11a3.500 3.500 0 0 1 4.500 0L26 21.500V24a2 2 0 0 1-2 2H2a2 2 0 0 1-2-2z" fill="url(#mt)"/><path d="M6 26l7.500-8 8 8z" fill="#1a86d8" opacity=".6"/><circle cx="19.500" cy="4.500" r="2.500" fill="#e8f0fa"/></svg><i class="absolute bottom-[6px] left-[23.5px] w-2 h-1 rounded-full bg-[#868686]"></i></div>
  </nav>

  <div class="ml-auto mr-6 flex items-center text-[15px] leading-5">
    <svg class="w-[13px] h-2" viewBox="0 0 13 8" fill="none" stroke="#1b1b1b" stroke-width="1.700"><path d="M.5 7.300l6-6 6 6"/></svg>
    <div class="ml-[22px] w-[38px] flex flex-col items-center mr-[15px] pb-[3px]"><span class="tracking-[-0.4px]">ENG</span><span>IN</span></div>
    <svg class="ml-[3px] w-5 h-4" viewBox="0 0 20 16" fill="none" stroke-width="1.500"><path d="M.5 6.500a13 13 0 0 1 19 0" stroke="#c3c3c3"/><path d="M3 9a10 10 0 0 1 14 0M5.500 11.500a6.300 6.300 0 0 1 9 0" stroke="#1b1b1b"/><circle cx="10" cy="13.800" r="2" fill="#1b1b1b"/></svg>
    <svg class="ml-[10px] w-[20px] h-[17px]" viewBox="0 0 20 17" fill="none" stroke="#1b1b1b" stroke-width="1.300"><path d="M.8 5.500h3L8.500 1.500v14L3.800 11.500h-3zM11 5.500a4.500 4.500 0 0 1 0 6"/><path d="M13.500 3.500a7.500 7.500 0 0 1 0 10M16.500 1a11 11 0 0 1 0 15" stroke="#bdbdbd"/></svg>
    <svg class="ml-[10px] mb-[3px] w-[20px] h-[17px]" viewBox="0 0 20 17"><path d="M9 4.500h6.500a2 2 0 0 1 2 2v6a2 2 0 0 1-2 2H3" fill="none" stroke="#1b1b1b" stroke-width="1.500"/><path d="M18 7.500h1.500v4H18zM0 9c0-4 2-7 6-9 1 3 2 6 1 8l3-3v7.500H4.500L7 8l-4 5C1 12.500 0 11 0 9z" fill="#1b1b1b"/></svg>
    <div class="ml-5 pb-1 w-[78px] flex flex-col items-end whitespace-nowrap"><span>16:13</span><span>19-06-2025</span></div>
  </div>
</footer>
</body>
</html>
